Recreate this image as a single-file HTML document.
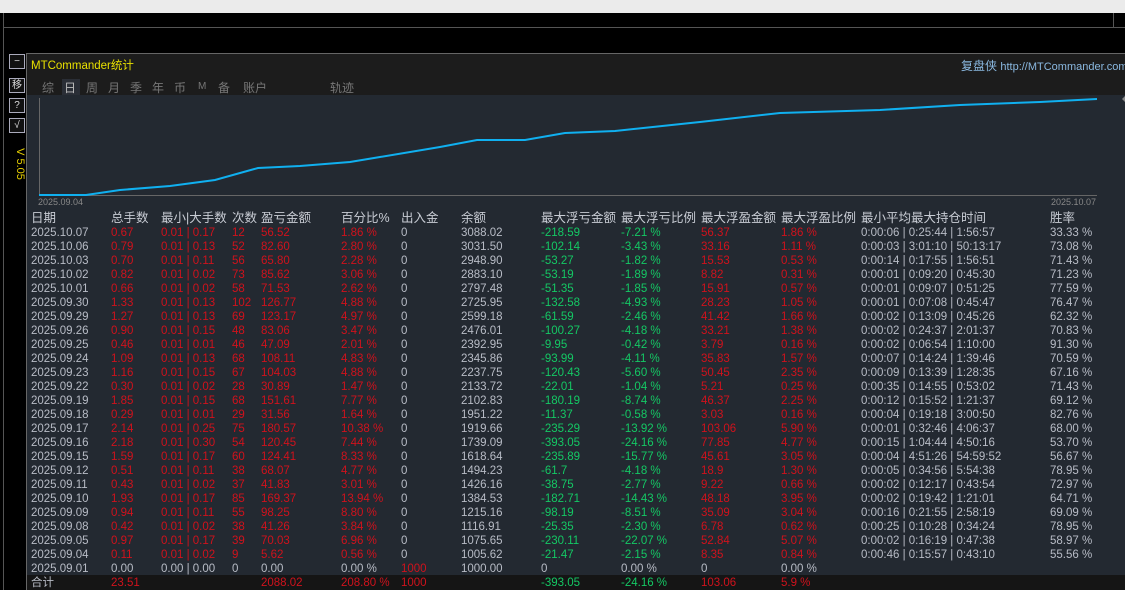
<!DOCTYPE html>
<html><head><meta charset="utf-8"><style>
html,body{margin:0;width:1125px;height:590px;overflow:hidden}
body{background:#000;position:relative;font-family:"Liberation Sans","Noto Sans CJK SC",sans-serif}
.a{position:absolute;white-space:nowrap}
.btn{position:absolute;left:9px;width:14px;height:13px;border:1px solid #aab;color:#ddd;font-size:10px;line-height:13px;text-align:center;background:#111}
.t{font-size:12px;color:#777}
.r{position:absolute;left:0;height:14px;font-size:11.5px;line-height:14px;width:1100px}
.r span{position:absolute;top:0}
.g{color:#b8bcc6}.d{color:#d0121c}.n{color:#14c864}
.h span{color:#c8ccd4;font-size:12.5px}
</style></head><body>
<div class="a" style="left:0;top:0;width:1125px;height:13px;background:#ebebeb"></div>
<div class="a" style="left:3px;top:13px;width:1px;height:577px;background:#555"></div>
<div class="a" style="left:4px;top:27px;width:1121px;height:1px;background:#555"></div>
<div class="a" style="left:1113px;top:13px;width:1px;height:14px;background:#555"></div>
<div class="btn" style="top:54px">−</div>
<div class="btn" style="top:78px">移</div>
<div class="btn" style="top:98px">?</div>
<div class="btn" style="top:118px">√</div>
<div class="a" style="left:4px;top:158px;color:#e8d000;font-size:11px;transform:rotate(90deg)">V 5.05</div>
<div class="a" style="left:26px;top:53px;width:1099px;height:537px;background:#1c1c1c;border-top:1px solid #666;border-left:1px solid #666"></div>
<div class="a" style="left:31px;top:57px;color:#e8e000;font-size:11.5px">MTCommander统计</div>
<div class="a" style="left:961px;top:57px;color:#8ab8e0;font-size:12px">复盘侠 <span style="font-size:11px">http://MTCommander.com</span></div>
<div class="a" style="left:62px;top:79px;width:18px;height:16px;background:#2a2e36"></div>
<div class="a t" style="left:42px;top:79px">综</div>
<div class="a t" style="left:64px;top:79px;color:#bbb">日</div>
<div class="a t" style="left:86px;top:79px">周</div>
<div class="a t" style="left:108px;top:79px">月</div>
<div class="a t" style="left:130px;top:79px">季</div>
<div class="a t" style="left:152px;top:79px">年</div>
<div class="a t" style="left:174px;top:79px">币</div>
<div class="a t" style="left:198px;top:81px;font-size:10px">M</div>
<div class="a t" style="left:218px;top:79px">备</div>
<div class="a t" style="left:243px;top:79px">账户</div>
<div class="a t" style="left:330px;top:79px">轨迹</div>
<div class="a" style="left:27px;top:95px;width:1098px;height:495px;background:#232931"></div>
<div class="a" style="left:27px;top:575px;width:1098px;height:15px;background:#151515"></div>
<svg class="a" style="left:0;top:0" width="1125" height="590">
<line x1="39.5" y1="98" x2="39.5" y2="196" stroke="#666"/>
<line x1="39" y1="195.5" x2="1097" y2="195.5" stroke="#666"/>
<polyline fill="none" stroke="#10b0f0" stroke-width="2" points="39,195 86,195 120,190 170,186 215,180 258,168 300,166 350,162 380,157 440,147 477,140 525,140 565,133 615,131 700,122 780,113 880,110 960,105 1040,102 1097,99"/>
</svg>
<div class="a" style="left:1118px;top:95px;width:0;height:0;border:4px solid transparent;border-right-color:#888"></div>
<div class="a" style="left:38px;top:197px;font-size:9px;color:#888">2025.09.04</div>
<div class="a" style="left:1051px;top:197px;font-size:9px;color:#888">2025.10.07</div>
<div id="tb"></div>
<script>
var X=[31,111,161,232,261,341,401,461,541,621,701,781,861,1050];
var H=["日期","总手数","最小|大手数","次数","盈亏金额","百分比%","出入金","余额","最大浮亏金额","最大浮亏比例","最大浮盈金额","最大浮盈比例","最小平均最大持仓时间","胜率"];
var D=`2025.10.07,0.67,0.01 | 0.17,12,56.52,1.86 %,0,3088.02,-218.59,-7.21 %,56.37,1.86 %,0:00:06 | 0:25:44 | 1:56:57,33.33 %
2025.10.06,0.79,0.01 | 0.13,52,82.60,2.80 %,0,3031.50,-102.14,-3.43 %,33.16,1.11 %,0:00:03 | 3:01:10 | 50:13:17,73.08 %
2025.10.03,0.70,0.01 | 0.11,56,65.80,2.28 %,0,2948.90,-53.27,-1.82 %,15.53,0.53 %,0:00:14 | 0:17:55 | 1:56:51,71.43 %
2025.10.02,0.82,0.01 | 0.02,73,85.62,3.06 %,0,2883.10,-53.19,-1.89 %,8.82,0.31 %,0:00:01 | 0:09:20 | 0:45:30,71.23 %
2025.10.01,0.66,0.01 | 0.02,58,71.53,2.62 %,0,2797.48,-51.35,-1.85 %,15.91,0.57 %,0:00:01 | 0:09:07 | 0:51:25,77.59 %
2025.09.30,1.33,0.01 | 0.13,102,126.77,4.88 %,0,2725.95,-132.58,-4.93 %,28.23,1.05 %,0:00:01 | 0:07:08 | 0:45:47,76.47 %
2025.09.29,1.27,0.01 | 0.13,69,123.17,4.97 %,0,2599.18,-61.59,-2.46 %,41.42,1.66 %,0:00:02 | 0:13:09 | 0:45:26,62.32 %
2025.09.26,0.90,0.01 | 0.15,48,83.06,3.47 %,0,2476.01,-100.27,-4.18 %,33.21,1.38 %,0:00:02 | 0:24:37 | 2:01:37,70.83 %
2025.09.25,0.46,0.01 | 0.01,46,47.09,2.01 %,0,2392.95,-9.95,-0.42 %,3.79,0.16 %,0:00:02 | 0:06:54 | 1:10:00,91.30 %
2025.09.24,1.09,0.01 | 0.13,68,108.11,4.83 %,0,2345.86,-93.99,-4.11 %,35.83,1.57 %,0:00:07 | 0:14:24 | 1:39:46,70.59 %
2025.09.23,1.16,0.01 | 0.15,67,104.03,4.88 %,0,2237.75,-120.43,-5.60 %,50.45,2.35 %,0:00:09 | 0:13:39 | 1:28:35,67.16 %
2025.09.22,0.30,0.01 | 0.02,28,30.89,1.47 %,0,2133.72,-22.01,-1.04 %,5.21,0.25 %,0:00:35 | 0:14:55 | 0:53:02,71.43 %
2025.09.19,1.85,0.01 | 0.15,68,151.61,7.77 %,0,2102.83,-180.19,-8.74 %,46.37,2.25 %,0:00:12 | 0:15:52 | 1:21:37,69.12 %
2025.09.18,0.29,0.01 | 0.01,29,31.56,1.64 %,0,1951.22,-11.37,-0.58 %,3.03,0.16 %,0:00:04 | 0:19:18 | 3:00:50,82.76 %
2025.09.17,2.14,0.01 | 0.25,75,180.57,10.38 %,0,1919.66,-235.29,-13.92 %,103.06,5.90 %,0:00:01 | 0:32:46 | 4:06:37,68.00 %
2025.09.16,2.18,0.01 | 0.30,54,120.45,7.44 %,0,1739.09,-393.05,-24.16 %,77.85,4.77 %,0:00:15 | 1:04:44 | 4:50:16,53.70 %
2025.09.15,1.59,0.01 | 0.17,60,124.41,8.33 %,0,1618.64,-235.89,-15.77 %,45.61,3.05 %,0:00:04 | 4:51:26 | 54:59:52,56.67 %
2025.09.12,0.51,0.01 | 0.11,38,68.07,4.77 %,0,1494.23,-61.7,-4.18 %,18.9,1.30 %,0:00:05 | 0:34:56 | 5:54:38,78.95 %
2025.09.11,0.43,0.01 | 0.02,37,41.83,3.01 %,0,1426.16,-38.75,-2.77 %,9.22,0.66 %,0:00:02 | 0:12:17 | 0:43:54,72.97 %
2025.09.10,1.93,0.01 | 0.17,85,169.37,13.94 %,0,1384.53,-182.71,-14.43 %,48.18,3.95 %,0:00:02 | 0:19:42 | 1:21:01,64.71 %
2025.09.09,0.94,0.01 | 0.11,55,98.25,8.80 %,0,1215.16,-98.19,-8.51 %,35.09,3.04 %,0:00:16 | 0:21:55 | 2:58:19,69.09 %
2025.09.08,0.42,0.01 | 0.02,38,41.26,3.84 %,0,1116.91,-25.35,-2.30 %,6.78,0.62 %,0:00:25 | 0:10:28 | 0:34:24,78.95 %
2025.09.05,0.97,0.01 | 0.17,39,70.03,6.96 %,0,1075.65,-230.11,-22.07 %,52.84,5.07 %,0:00:02 | 0:16:19 | 0:47:38,58.97 %
2025.09.04,0.11,0.01 | 0.02,9,5.62,0.56 %,0,1005.62,-21.47,-2.15 %,8.35,0.84 %,0:00:46 | 0:15:57 | 0:43:10,55.56 %`.split("\n");
var C=["g","d","d","d","d","d","g","g","n","n","d","d","g","g"];
var S=14,T=226;
var h='<div class="r h" style="top:211px">'+H.map((t,i)=>'<span style="left:'+X[i]+'px">'+t+'</span>').join("")+'</div>';
D.forEach((l,j)=>{var f=l.split(",");h+='<div class="r" style="top:'+(T+j*S)+'px">'+f.map((t,i)=>'<span class="'+C[i]+'" style="left:'+X[i]+'px">'+t+'</span>').join("")+'</div>';});
var z="2025.09.01,0.00,0.00 | 0.00,0,0.00,0.00 %,1000,1000.00,0,0.00 %,0,0.00 %".split(",");
h+='<div class="r" style="top:'+(T+24*S)+'px">'+z.map((t,i)=>'<span class="'+(i==6?"d":"g")+'" style="left:'+X[i]+'px">'+t+'</span>').join("")+'</div>';
var s=[["合计",0,"g"],["23.51",1,"d"],["2088.02",4,"d"],["208.80 %",5,"d"],["1000",6,"d"],["-393.05",8,"n"],["-24.16 %",9,"n"],["103.06",10,"d"],["5.9 %",11,"d"]];
h+='<div class="r" style="top:'+(T+25*S)+'px">'+s.map(a=>'<span class="'+a[2]+'" style="left:'+X[a[1]]+'px">'+a[0]+'</span>').join("")+'</div>';
document.getElementById("tb").innerHTML=h;
</script>
</body></html>
